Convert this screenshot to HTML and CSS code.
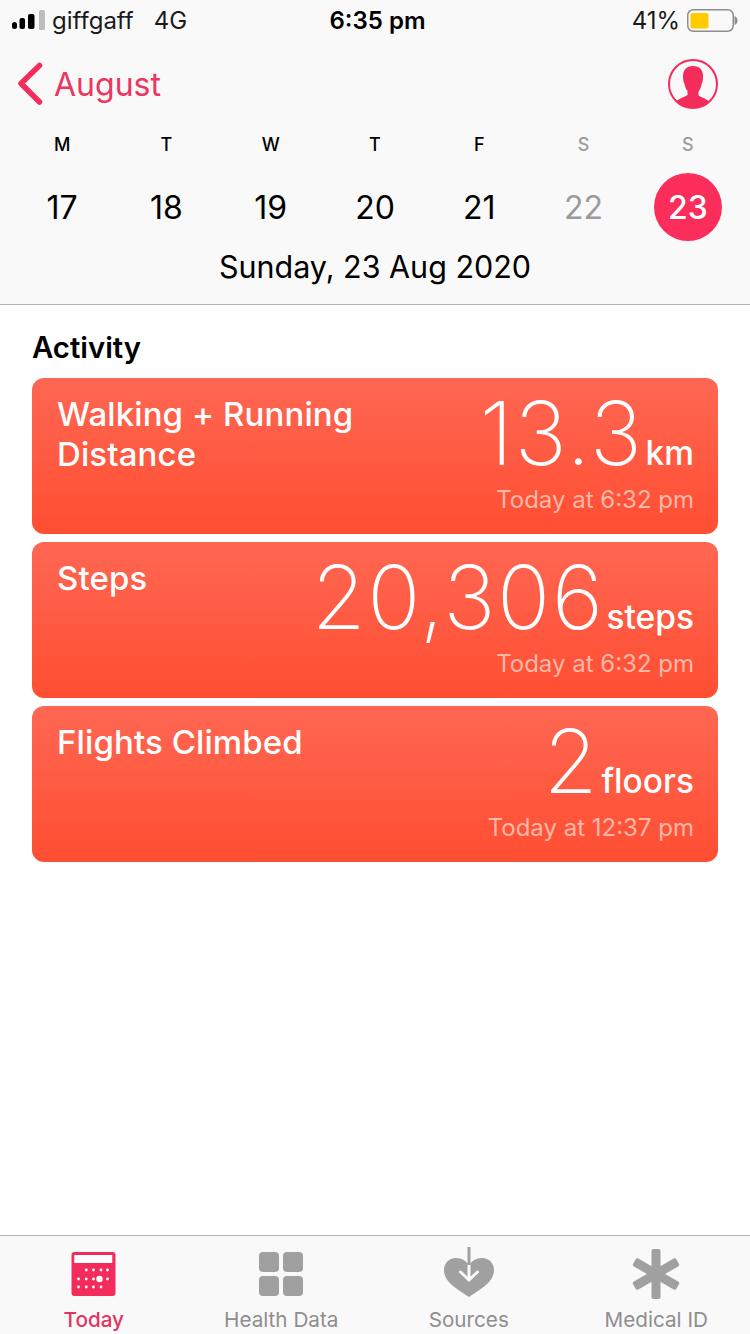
FILE: index.html
```html
<!DOCTYPE html>
<html lang="en">
<head>
<meta charset="utf-8">
<title>Health</title>
<link rel="stylesheet" href="styles.css">
</head>
<body>
<div class="app">
  <header class="top">
    <div class="status">
      <div class="status-left">
        <svg class="signal" width="34" height="32" viewBox="0 0 34 32"><rect x="0" y="18" width="5" height="7" rx="2.500" fill="#000"/><rect x="7.500" y="14" width="5.500" height="11" rx="2" fill="#000"/><rect x="16" y="10" width="6.500" height="15" rx="2" fill="#000"/><rect x="27" y="6" width="6" height="20" rx="1.500" fill="#bdbdbd"/></svg>
        <span class="carrier">giffgaff</span>
        <span class="net">4G</span>
      </div>
      <div class="clock">6:35 pm</div>
      <div class="status-right">
        <span class="pct">41%</span>
        <svg width="54" height="26" viewBox="0 0 54 26"><rect x="3.750" y="2.750" width="45.500" height="21.500" rx="5.500" fill="none" stroke="#8e8e8e" stroke-width="1.500"/><rect x="6.500" y="6" width="18" height="15.500" rx="2" fill="#fc0"/><path d="M50.500 9c2 .5 3 2.500 3 4.500s-1 4-3 4.500z" fill="#8e8e8e"/></svg>
      </div>
    </div>
    <div class="nav">
      <div class="back">
        <svg width="26" height="44" viewBox="0 0 26 44"><path d="M22.500 3.500 4 21.500 22.500 40" fill="none" stroke="#f42c5c" stroke-width="5.500" stroke-linecap="round" stroke-linejoin="round"/></svg>
        <span class="month">August</span>
      </div>
      <svg class="avatar" width="50" height="50" viewBox="0 0 50 50"><defs><clipPath id="c"><circle cx="25" cy="25" r="24"/></clipPath></defs><g clip-path="url(#c)"><path d="M25 7c-7 0-10 4.500-10 10.500 0 3 .5 5.500 1.500 7.500.5 3 1.500 5 3 7v4c-3 2.500-8 3-11 6V52h33v-9.500c-3-3-8-3.500-11-6v-4c1.500-2 2.500-4 3-7 1-2 1.500-4.500 1.500-7.500C35.500 11.500 32 7 25 7z" fill="#f42c5c"/></g><circle cx="25" cy="25" r="24" fill="none" stroke="#f42c5c" stroke-width="2"/></svg>
    </div>
    <div class="week">
      <span class="dow">M</span><span class="dow">T</span><span class="dow">W</span><span class="dow">T</span><span class="dow">F</span><span class="dow dim">S</span><span class="dow dim">S</span>
      <span class="day">17</span><span class="day">18</span><span class="day">19</span><span class="day">20</span><span class="day">21</span><span class="day dim">22</span><span class="day sel"><span class="sel-dot">23</span></span>
    </div>
    <div class="date">Sunday, 23 Aug 2020</div>
  </header>

  <main class="content">
    <h2 class="section">Activity</h2>
    <div class="cards">
      <article class="card">
        <div class="name">Walking + Running<br>Distance</div>
        <div class="reading">
          <div class="value"><span class="num">13.3</span><span class="unit">km</span></div>
          <div class="when">Today at 6:32 pm</div>
        </div>
      </article>
      <article class="card">
        <div class="name">Steps</div>
        <div class="reading">
          <div class="value"><span class="num">20,306</span><span class="unit">steps</span></div>
          <div class="when">Today at 6:32 pm</div>
        </div>
      </article>
      <article class="card">
        <div class="name">Flights Climbed</div>
        <div class="reading">
          <div class="value"><span class="num">2</span><span class="unit">floors</span></div>
          <div class="when">Today at 12:37 pm</div>
        </div>
      </article>
    </div>
  </main>

  <nav class="tabs">
    <div class="tab active">
      <svg width="46" height="46" viewBox="0 0 46 46"><rect x="0.500" y="1" width="44" height="44" rx="3" fill="#f42c5c"/><rect x="3.250" y="4" width="38" height="8" fill="#fff"/><g fill="#fff"><circle cx="15.250" cy="19" r="1.400"/><circle cx="22.500" cy="19" r="1.400"/><circle cx="30" cy="19" r="1.400"/><circle cx="36.500" cy="19" r="1.400"/><circle cx="7.500" cy="28" r="1.400"/><circle cx="15.250" cy="28" r="1.400"/><circle cx="22.500" cy="28" r="1.400"/><circle cx="28.500" cy="28" r="3.200"/><circle cx="36.500" cy="28" r="1.400"/><circle cx="7.500" cy="36" r="1.400"/><circle cx="15.250" cy="36" r="1.400"/><circle cx="22.500" cy="36" r="1.400"/><circle cx="30" cy="36" r="1.400"/></g></svg>
      <span>Today</span>
    </div>
    <div class="tab">
      <svg width="46" height="46" viewBox="0 0 46 46"><g fill="#a0a0a0"><rect x="1" y="1" width="20" height="20" rx="4"/><rect x="25" y="1" width="20" height="20" rx="4"/><rect x="1" y="25" width="20" height="20" rx="4"/><rect x="25" y="25" width="20" height="20" rx="4"/></g></svg>
      <span>Health Data</span>
    </div>
    <div class="tab sources">
      <svg width="52" height="52" viewBox="0 0 52 52"><path d="M26 51C14 43 1 36 1 24 1 17 6 12 13 12c6 0 10 3 13 7 3-4 7-7 13-7 7 0 12 5 12 12 0 12-13 19-25 27z" fill="#a0a0a0"/><path d="M26 19v15M17.500 26 26 34l8.500-8" fill="none" stroke="#fafafa" stroke-width="3" stroke-linecap="round" stroke-linejoin="round"/><path d="M26 1v18" stroke="#a0a0a0" stroke-width="3"/></svg>
      <span>Sources</span>
    </div>
    <div class="tab medical">
      <svg width="50" height="52" viewBox="0 0 50 52"><g fill="#a0a0a0"><rect x="20.500" y="2" width="9" height="50" rx="2"/><rect x="20.500" y="2" width="9" height="50" rx="2" transform="rotate(60 25 27)"/><rect x="20.500" y="2" width="9" height="50" rx="2" transform="rotate(-60 25 27)"/></g></svg>
      <span>Medical ID</span>
    </div>
  </nav>
</div>
</body>
</html>
```
FILE: styles.css
```css
* { box-sizing: border-box; }
html, body { margin: 0; padding: 0; }
body { width: 750px; height: 1334px; background: #fff; font-family: Inter, "Liberation Sans", sans-serif; color: #000; overflow: hidden; }
.app { width: 750px; height: 1334px; display: flex; flex-direction: column; }

.top { height: 305px; background: #f9f9f9; border-bottom: 1px solid #b4b4b4; }
.status { height: 40px; display: grid; grid-template-columns: 1fr auto 1fr; align-items: center; padding: 0 12px; font-size: 24px; color: #1a1a1a; }
.status-left { display: flex; align-items: center; }
.signal { margin-right: 6px; }
.net { margin-left: 20px; }
.clock { font-weight: 600; color: #000; padding-left: 5px; }
.status-right { display: flex; justify-content: flex-end; align-items: center; gap: 4px; }

.nav { height: 88px; display: flex; justify-content: space-between; align-items: center; padding: 0 32px 0 17px; }
.back { display: flex; align-items: center; gap: 11px; color: #ec3560; }
.month { font-size: 32px; }

.week { display: grid; grid-template-columns: repeat(7, 1fr); grid-template-rows: 32px 62px; row-gap: 16px; padding: 0 10px; align-items: center; justify-items: center; }
.dow { font-size: 18px; font-weight: 500; }
.day { font-size: 32px; font-weight: 370; }
.dim { color: #9b9b9b; }
.sel { color: #fff; font-weight: 500; }
.sel-dot { display: flex; align-items: center; justify-content: center; width: 68px; height: 68px; border-radius: 50%; background: #fb2d5b; }
.date { text-align: center; font-size: 30.500px; margin-top: 10px; }

.content { flex: 1; padding: 0 32px; }
.section { margin: 25px 0 12px 0; font-size: 29.300px; line-height: 36px; font-weight: 600; }
.cards { display: flex; flex-direction: column; gap: 8px; }
.card { height: 156px; border-radius: 12px; background: linear-gradient(#ff6753, #ff4e32); color: #fff; padding: 16px 24px 0 25px; display: flex; justify-content: space-between; }
.name { font-size: 33px; line-height: 40px; font-weight: 500; letter-spacing: .1px; }
.reading { display: flex; flex-direction: column; align-items: flex-end; }
.value { display: flex; align-items: baseline; height: 86px; margin-top: -9px; }
.num { font-size: 88px; line-height: 96px; font-weight: 250; letter-spacing: 1.500px; }
.unit { font-size: 33.500px; font-weight: 500; margin-left: 2px; }
.when { font-size: 24px; line-height: 30px; color: #ffb8a8; margin-top: 14px; }

.tabs { height: 99px; background: #f9f9f9; border-top: 1px solid #b4b4b4; display: grid; grid-template-columns: repeat(4, 1fr); }
.tab { display: flex; flex-direction: column; align-items: center; justify-content: flex-end; padding-bottom: 2px; gap: 10px; font-size: 20.700px; font-weight: 400; color: #8e8e8e; height: 98px; }
.tab.active { color: #e0355f; font-weight: 500; }
.tab.sources { gap: 9px; }
.tab.medical { gap: 8px; }
```
